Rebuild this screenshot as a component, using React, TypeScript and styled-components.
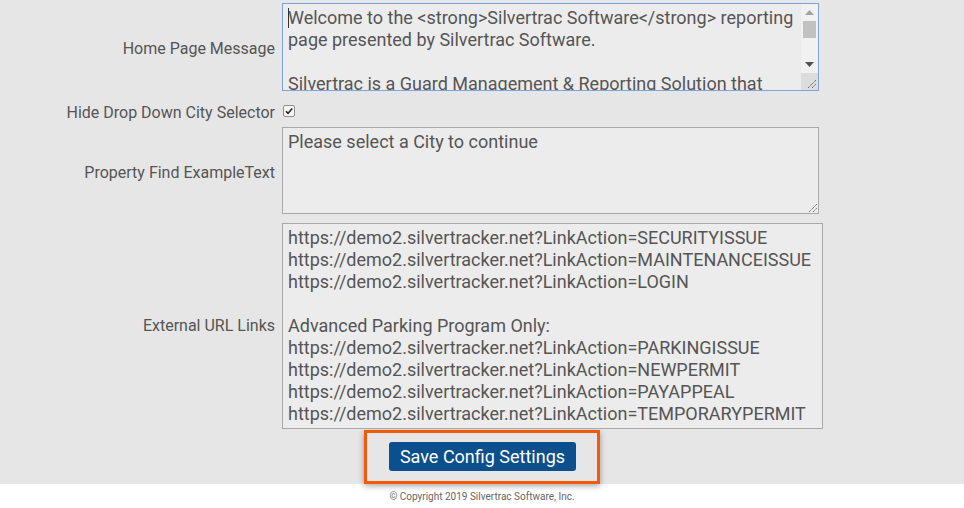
import React from "react";
import styled, { createGlobalStyle } from "styled-components";

const Global = createGlobalStyle`
  html, body { margin: 0; padding: 0; background: #ffffff; }
  body { font-family: Roboto, "Liberation Sans", Arial, sans-serif; }
`;

const Main = styled.div`
  background: #e6e6e6;
  height: 484px;
  padding-top: 3px;
  box-sizing: border-box;
`;

const Row = styled.div<{ $mt?: number; $pad?: string }>`
  display: flex;
  align-items: center;
  gap: 7px;
  margin-top: ${(p) => p.$mt || 0}px;
  padding: ${(p) => p.$pad || "0"};
`;

const Label = styled.label<{ $lift?: boolean }>`
  flex: 0 0 275px;
  text-align: right;
  font-size: 16px;
  color: #555;
  line-height: 20px;
  padding-top: ${(p) => (p.$lift ? 0 : 4)}px;
`;

const FieldBox = styled.div`
  position: relative;
  display: flex;
`;

const Area = styled.textarea<{ $w: number; $h: number; $focus?: boolean; $bar?: boolean }>`
  box-sizing: border-box;
  width: ${(p) => p.$w}px;
  height: ${(p) => p.$h}px;
  margin: 0;
  padding: 3px ${(p) => (p.$bar ? 22 : 5)}px 3px 5px;
  font-family: Roboto, "Liberation Sans", Arial, sans-serif;
  font-size: 18px;
  line-height: 22px;
  color: #555;
  background: #ececec;
  border: 1px solid ${(p) => (p.$focus ? "#7ea3e2" : "#a9a9a9")};
  outline: none;
  resize: none;
  overflow: hidden;
  display: block;
`;

const ScrollBar = styled.div`
  position: absolute;
  top: 1px;
  right: 1px;
  bottom: 1px;
  width: 17px;
  background: #f1f1f1;
  display: flex;
  flex-direction: column;
`;

const ScrollButton = styled.div`
  height: 17px;
  display: flex;
  align-items: center;
  justify-content: center;
`;

const Thumb = styled.div`
  height: 17px;
  margin: 0 2px;
  background: #c1c1c1;
`;

const Track = styled.div`
  flex: 1;
`;

const Corner = styled.div`
  height: 17px;
  background: #dcdcdc;
  position: relative;
`;

const Grip = styled.svg`
  position: absolute;
  right: 1px;
  bottom: 1px;
`;

const Caret = styled.div`
  position: absolute;
  left: 6px;
  top: 5px;
  width: 1px;
  height: 20px;
  background: #333;
`;

const Check = styled.input`
  appearance: none;
  -webkit-appearance: none;
  margin: 0 0 0 1px;
  width: 12px;
  height: 12px;
  box-sizing: border-box;
  border: 1px solid #8f8f8f;
  border-radius: 2px;
  background: #f4f4f4 url("data:image/svg+xml;utf8,<svg xmlns='http://www.w3.org/2000/svg' width='10' height='10'><path d='M2 5.2 L4 7.4 L8.2 2.4' stroke='%23222' stroke-width='1.6' fill='none'/></svg>") no-repeat center;
`;

const ActionRow = styled.div`
  display: flex;
  justify-content: center;
  margin-top: 1px;
`;

const Highlight = styled.div`
  border: 3px solid #f25a0a;
  box-shadow: 0 2px 6px rgba(0, 0, 0, 0.35);
  padding: 9px 21px 10px 22px;
  display: flex;
`;

const SaveButton = styled.button`
  background: #0b4f8c;
  color: #fff;
  border: none;
  border-radius: 3px;
  height: 29px;
  width: 187px;
  padding: 0;
  font-family: Roboto, "Liberation Sans", Arial, sans-serif;
  font-size: 18px;
  line-height: 29px;
  cursor: pointer;
`;

const Footer = styled.footer`
  height: 24px;
  display: flex;
  align-items: center;
  justify-content: center;
  font-size: 10px;
  color: #666;
  background: #fff;
`;

const homeMessage = `Welcome to the <strong>Silvertrac Software</strong> reporting page presented by Silvertrac Software.

Silvertrac is a Guard Management & Reporting Solution that helps security companies manage their officers, properties and reports in one place.`;

const links = `https://demo2.silvertracker.net?LinkAction=SECURITYISSUE
https://demo2.silvertracker.net?LinkAction=MAINTENANCEISSUE
https://demo2.silvertracker.net?LinkAction=LOGIN

Advanced Parking Program Only:
https://demo2.silvertracker.net?LinkAction=PARKINGISSUE
https://demo2.silvertracker.net?LinkAction=NEWPERMIT
https://demo2.silvertracker.net?LinkAction=PAYAPPEAL
https://demo2.silvertracker.net?LinkAction=TEMPORARYPERMIT`;

function GripIcon() {
  return (
    <Grip width="11" height="11" viewBox="0 0 11 11">
      <path d="M2 10 L10 2 M6 10 L10 6" stroke="#6a6a6a" strokeWidth="1" strokeDasharray="1.4 0.6" />
    </Grip>
  );
}

export default function App() {
  return (
    <>
      <Global />
      <Main>
        <Row>
          <Label>Home Page Message</Label>
          <FieldBox>
            <Area $w={537} $h={88} $focus $bar defaultValue={homeMessage} />
            <Caret />
            <ScrollBar>
              <ScrollButton>
                <svg width="9" height="5" viewBox="0 0 9 5"><path d="M0 5 L4.5 0 L9 5 Z" fill="#a3a3a3" /></svg>
              </ScrollButton>
              <Thumb />
              <Track />
              <ScrollButton>
                <svg width="9" height="5" viewBox="0 0 9 5"><path d="M0 0 L4.5 5 L9 0 Z" fill="#505050" /></svg>
              </ScrollButton>
              <Corner>
                <GripIcon />
              </Corner>
            </ScrollBar>
          </FieldBox>
        </Row>

        <Row $pad="8px 0 4px">
          <Label>Hide Drop Down City Selector</Label>
          <Check type="checkbox" defaultChecked />
        </Row>

        <Row>
          <Label>Property Find ExampleText</Label>
          <FieldBox>
            <Area $w={537} $h={87} defaultValue="Please select a City to continue" />
            <GripIcon />
          </FieldBox>
        </Row>

        <Row $mt={9}>
          <Label $lift>External URL Links</Label>
          <FieldBox>
            <Area $w={541} $h={206} defaultValue={links} />
          </FieldBox>
        </Row>

        <ActionRow>
          <Highlight>
            <SaveButton>Save Config Settings</SaveButton>
          </Highlight>
        </ActionRow>
      </Main>
      <Footer>© Copyright 2019 Silvertrac Software, Inc.</Footer>
    </>
  );
}
